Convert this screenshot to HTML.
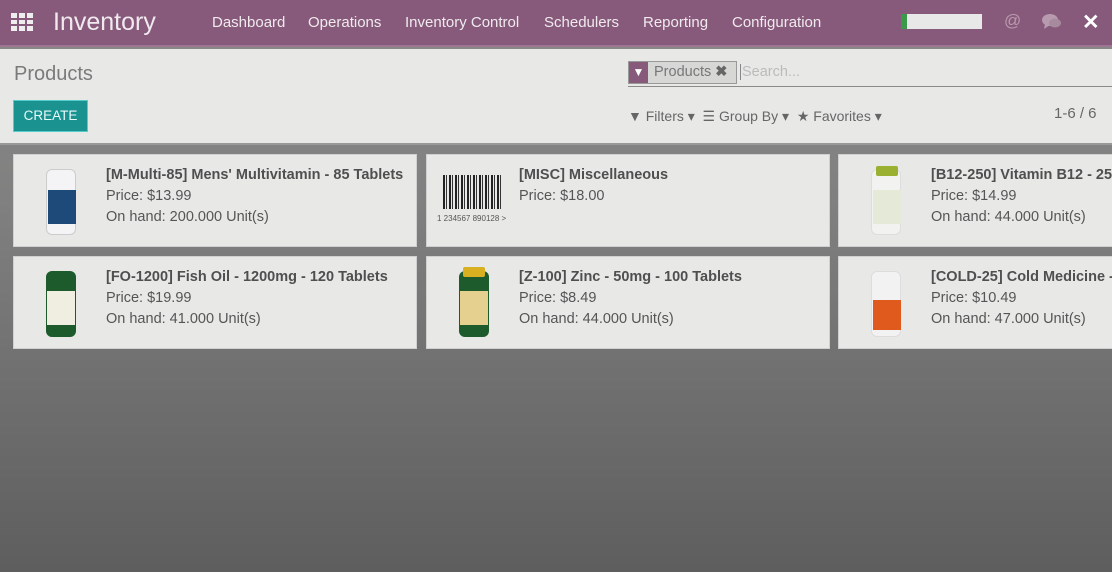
<!DOCTYPE html>
<html><head><style>
*{margin:0;padding:0;box-sizing:border-box}
body{width:1112px;height:572px;overflow:hidden;font-family:"Liberation Sans",sans-serif;background:linear-gradient(#8a8a88 0,#808080 200px,#6c6c6c 420px,#5e5e5e 572px);position:relative}
.top{position:absolute;left:0;top:0;width:1112px;height:47px;background:#875a7b;border-bottom:2px solid #9e7592}
.top .t{position:absolute;color:#f0eaee;font-size:15px;top:14px}
.cp{position:absolute;left:0;top:49px;width:1112px;height:96px;background:#e8e9e7;border-bottom:2px solid #999}
.card{position:absolute;width:404px;height:93px;background:#e8e9e7;border:1px solid #d0d0d0}
.card .tx{position:absolute;left:92px;top:10px;font-size:14.5px;color:#555;line-height:21px;white-space:nowrap}
.card b{color:#4f4f4f}
.bot{position:absolute;left:32px;top:14px;width:30px;height:66px;border-radius:6px}
.cap{position:absolute;left:4px;top:-4px;width:22px;height:10px;border-radius:2px}
.lab{position:absolute;left:1px;top:20px;width:28px;height:34px}
</style></head><body>
<div class="top">
 <div style="position:absolute;left:11px;top:13px;width:22px;height:18px;display:grid;grid-template-columns:repeat(3,6px);gap:2px">
  <i style="background:#eee"></i><i style="background:#eee"></i><i style="background:#eee"></i><i style="background:#eee"></i><i style="background:#eee"></i><i style="background:#eee"></i><i style="background:#eee"></i><i style="background:#eee"></i><i style="background:#eee"></i></div>
 <div class="t" style="left:53px;top:8px;font-size:25px">Inventory</div>
 <div class="t" style="left:212px">Dashboard</div>
 <div class="t" style="left:308px">Operations</div>
 <div class="t" style="left:405px">Inventory Control</div>
 <div class="t" style="left:544px">Schedulers</div>
 <div class="t" style="left:643px">Reporting</div>
 <div class="t" style="left:732px">Configuration</div>
 <div style="position:absolute;left:901px;top:14px;width:81px;height:15px;background:#e8e8e8;border-left:6px solid #3a9a4a"></div>
 <div class="t" style="left:1004px;top:11px;font-size:17px;color:#b89aae">@</div>
 <svg style="position:absolute;left:1042px;top:13px" width="20" height="18" viewBox="0 0 20 18"><ellipse cx="8" cy="7" rx="8" ry="6" fill="#b89aae"/><path d="M3 11 L2 16 L8 12Z" fill="#b89aae"/><ellipse cx="13" cy="10" rx="6" ry="4.5" fill="#a88a9e"/></svg>
 <div class="t" style="left:1082px;top:10px;font-size:21px;color:#fff;font-weight:bold">&#10005;</div>
</div>
<div class="cp">
 <div style="position:absolute;left:14px;top:14px;font-size:20px;color:#7a7a7a">Products</div>
 <div style="position:absolute;left:13px;top:51px;width:75px;height:32px;background:#1a9390;border:1px solid #5cc;color:#e8fafa;font-size:13.5px;text-align:center;line-height:30px">CREATE</div>
 <div style="position:absolute;left:628px;top:12px;width:484px;height:26px;border-bottom:1px solid #8a8a8a"></div>
 <div style="position:absolute;left:628px;top:12px;width:109px;height:23px;border:1px solid #999;background:#d7d8d6">
  <div style="position:absolute;left:0;top:0;width:19px;height:21px;background:#875a7b;color:#fff;font-size:12px;text-align:center;line-height:21px">&#9660;</div>
  <div style="position:absolute;left:25px;top:2px;font-size:14.5px;color:#777">Products <b style="color:#666">&#10006;</b></div>
 </div>
 <div style="position:absolute;left:740px;top:15px;font-size:14.5px;color:#bbb;border-left:1px solid #888;padding-left:1px">Search...</div>
 <div style="position:absolute;left:628px;top:59px;font-size:14px;color:#666;white-space:nowrap">&#9660; Filters &#9662; &nbsp;&#9776; Group By &#9662; &nbsp;&#9733; Favorites &#9662;</div>
 <div style="position:absolute;left:1054px;top:56px;font-size:15px;color:#666">1-6 / 6</div>
</div>

<div class="card" style="left:13px;top:154px"><div class="bot" style="background:#f4f4f6;border:1px solid #ccc"><div class="lab" style="background:#1e4a7a"></div></div><div class="tx"><b>[M-Multi-85] Mens' Multivitamin - 85 Tablets</b><br>Price: $13.99<br>On hand: 200.000 Unit(s)</div></div>
<div class="card" style="left:426px;top:154px"><div style="position:absolute;left:16px;top:20px;width:60px;height:34px;background:repeating-linear-gradient(90deg,#222 0 2px,#e8e9e7 2px 3px,#333 3px 4px,#e8e9e7 4px 6px)"></div><div style="position:absolute;left:10px;top:59px;font-size:8px;color:#555">1 234567 890128 &gt;</div><div class="tx"><b>[MISC] Miscellaneous</b><br>Price: $18.00</div></div>
<div class="card" style="left:838px;top:154px"><div class="bot" style="background:#f2f2f0;border:1px solid #ddd"><div class="cap" style="background:#9ab030"></div><div class="lab" style="background:#e5ead8"></div></div><div class="tx"><b>[B12-250] Vitamin B12 - 250</b><br>Price: $14.99<br>On hand: 44.000 Unit(s)</div></div>

<div class="card" style="left:13px;top:256px"><div class="bot" style="background:#1d5a2c"><div class="lab" style="background:#f0eee0"></div></div><div class="tx"><b>[FO-1200] Fish Oil - 1200mg - 120 Tablets</b><br>Price: $19.99<br>On hand: 41.000 Unit(s)</div></div>
<div class="card" style="left:426px;top:256px"><div class="bot" style="background:#1d5a2c"><div class="cap" style="background:#d9b020"></div><div class="lab" style="background:#e6d090"></div></div><div class="tx"><b>[Z-100] Zinc - 50mg - 100 Tablets</b><br>Price: $8.49<br>On hand: 44.000 Unit(s)</div></div>
<div class="card" style="left:838px;top:256px"><div class="bot" style="background:#f2f2f2;border:1px solid #ddd"><div class="lab" style="background:#e05a1e;top:28px;height:30px"></div></div><div class="tx"><b>[COLD-25] Cold Medicine - 25</b><br>Price: $10.49<br>On hand: 47.000 Unit(s)</div></div>
</body></html>
